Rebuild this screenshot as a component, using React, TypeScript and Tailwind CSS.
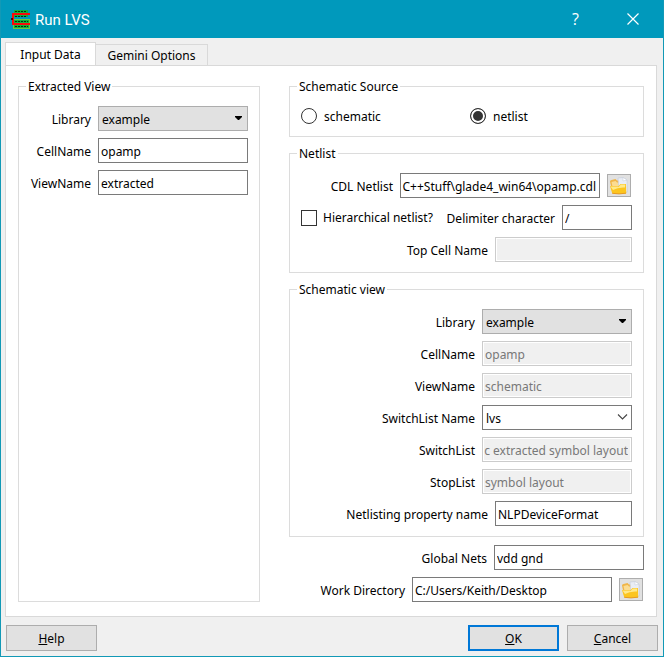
import { useEffect, useRef, useState } from "react";
import type { InputHTMLAttributes, ReactNode, SelectHTMLAttributes } from "react";
import { clsx } from "clsx";

function AppIcon() {
  return (
    <svg width="20" height="20" viewBox="0 0 20 20" shapeRendering="crispEdges" aria-hidden="true">
      <rect x="3" y="1" width="14" height="7" fill="#12b03c" />
      <rect x="2" y="10" width="17" height="10" fill="#12b03c" />
      <path d="M2.500 10.500h16v9h-16z" fill="none" stroke="#6cc644" />
      <path d="M4 2.500h12M4 7.500h12M4 12.500h13M4 17.500h13" stroke="#06300f" strokeDasharray="2 1" />
      <path d="M19 5H2v10h17" fill="none" stroke="#fb0a0a" strokeWidth="2" />
      <rect x="0" y="9" width="2" height="2" fill="#500808" />
    </svg>
  );
}

function FolderIcon() {
  return (
    <svg width="20" height="18" viewBox="0 0 20 18" aria-hidden="true">
      <path d="M1 4.500Q1 3 2.500 3l4-1L8 3.500h3V14H3z" fill="#f0b548" />
      <path d="M2.500 5l4-1L8 5.500l4 .5v6H4z" fill="#fbdc92" />
      <path d="M9 1l5-.5L18 3l.5 12H10z" fill="#e9edf5" stroke="#c3cad8" strokeWidth=".6" />
      <path d="M14 .5V4l4-1z" fill="#fff" stroke="#c3cad8" strokeWidth=".5" />
      <path d="M1 9l8 .5L11.500 7H17l.3 9.200Q10 17.500 3.200 16.300z" fill="#fcc51f" />
      <path d="M1.500 9.500l8 .5 2.300-2.500h4.500L16 10.500Q9 10 4 13z" fill="#ffe98a" />
      <path d="M3.200 16.300Q10 17.500 17 16.200" fill="none" stroke="#e59a22" />
    </svg>
  );
}

function Group({ title, className, children }: { title: string; className?: string; children: ReactNode }) {
  return (
    <fieldset className={clsx("min-w-0 border border-[#dcdcdc] pl-[7px]", className)}>
      <legend className="px-[2px] leading-[17px]">{title}</legend>
      {children}
    </fieldset>
  );
}

function Row({ label, htmlFor, children }: { label: string; htmlFor: string; children: ReactNode }) {
  return (
    <div className="flex items-center justify-end gap-[7px]">
      <label htmlFor={htmlFor} className="whitespace-nowrap pt-[2px]">
        {label}
      </label>
      {children}
    </div>
  );
}

type FieldProps = InputHTMLAttributes<HTMLInputElement> & { showEnd?: boolean };

function Field({ className, showEnd, ...rest }: FieldProps) {
  const ref = useRef<HTMLInputElement>(null);
  useEffect(() => {
    if (showEnd && ref.current) ref.current.scrollLeft = ref.current.scrollWidth;
  }, [showEnd]);
  return (
    <input
      ref={ref}
      type="text"
      className={clsx(
        "h-[25px] min-w-0 border border-[#7a7a7a] bg-white pt-[2px] text-black outline-none focus:border-[#0078d7]",
        "disabled:border-[#cccccc] disabled:bg-[#f0f0f0] disabled:text-[#787878] disabled:shadow-[inset_0_0_0_1px_#ffffff]",
        showEnd ? "pl-0 pr-[3px] text-right" : "px-[2px]",
        className,
      )}
      {...rest}
    />
  );
}

type SelectProps = SelectHTMLAttributes<HTMLSelectElement> & { editable?: boolean };

function Select({ editable, children, ...rest }: SelectProps) {
  return (
    <div className="relative w-[150px]">
      <select
        className={clsx(
          "h-[25px] w-full appearance-none border pl-[3px] pr-5 pt-[2px] text-black outline-none",
          editable ? "border-[#7a7a7a] bg-white" : "border-[#adadad] bg-[#e1e1e1]",
        )}
        {...rest}
      >
        {children}
      </select>
      {editable ? (
        <svg className="pointer-events-none absolute right-1 top-2" width="11" height="8" viewBox="0 0 11 8" aria-hidden="true">
          <path d="M1 1.500l4.500 4.500L10 1.500" fill="none" stroke="#444" strokeWidth="1.100" />
        </svg>
      ) : (
        <svg className="pointer-events-none absolute right-[6px] top-[10px]" width="7" height="4" viewBox="0 0 7 4" aria-hidden="true">
          <path d="M0 0h7v1L4 4H3L0 1z" fill="#000" />
        </svg>
      )}
    </div>
  );
}

function BrowseButton({ label }: { label: string }) {
  return (
    <button type="button" aria-label={label} className="mr-px flex h-[23px] w-6 items-center justify-center border border-[#adadad] bg-[#e1e1e1]">
      <FolderIcon />
    </button>
  );
}

function DialogButton({ children, primary }: { children: ReactNode; primary?: boolean }) {
  return (
    <button
      type="button"
      className={clsx(
        "h-[26px] w-[91px] bg-[#e1e1e1] pt-[2px]",
        primary ? "border-2 border-[#0078d7]" : "border border-[#adadad]",
      )}
    >
      {children}
    </button>
  );
}

function Radio({ label, value, source, onPick, className }: { label: string; value: string; source: string; onPick: (v: string) => void; className?: string }) {
  return (
    <label className={clsx("flex items-center gap-[7px]", className)}>
      <input
        type="radio"
        name="source"
        value={value}
        checked={source === value}
        onChange={() => onPick(value)}
        className="h-4 w-4 appearance-none rounded-full border border-[#333333] bg-white checked:bg-[#333333] checked:shadow-[inset_0_0_0_2px_#ffffff]"
      />
      <span className="-mb-[2px]">{label}</span>
    </label>
  );
}

export default function App() {
  const [source, setSource] = useState("netlist");
  return (
    <div className="flex min-h-screen flex-col border border-t-0 border-[#1299b6] bg-[#f0f0f0] font-['Noto_Sans','DejaVu_Sans',sans-serif] text-[12px] leading-4 text-black">
      <header className="flex h-[38px] items-center bg-[#0099bc] pl-[10px] text-white">
        <AppIcon />
        <h1 className="ml-1 flex-1 pt-[2px] font-['Roboto',sans-serif] text-[15px] leading-5">Run LVS</h1>
        <button type="button" aria-label="Help" className="flex h-full w-[55px] items-center justify-center font-['Open_Sans',sans-serif] text-[16px]">
          ?
        </button>
        <button type="button" aria-label="Close" className="flex h-full w-[60px] items-center justify-center">
          <svg width="12" height="12" viewBox="0 0 12 12" aria-hidden="true">
            <path d="M.5.5l11 11M11.500.5l-11 11" stroke="#fff" strokeWidth="1.200" />
          </svg>
        </button>
      </header>

      <div role="tablist" className="flex items-end pl-1 pt-1">
        <button type="button" role="tab" aria-selected="true" className="-mb-px h-6 w-[91px] border border-b-0 border-[#d9d9d9] bg-white">
          Input Data
        </button>
        <button type="button" role="tab" aria-selected="false" className="h-[21px] w-[112px] border border-b-0 border-l-0 border-[#d9d9d9] bg-[#f0f0f0] pt-[2px]">
          Gemini Options
        </button>
      </div>

      <main className="ml-1 mr-[6px] flex flex-1 gap-[29px] border border-[#d9d9d9] bg-white px-3 pb-[14px] pt-3">
        <Group title="Extracted View" className="w-[242px] pr-[11px]">
          <div className="flex flex-col gap-[7px] pt-[11px]">
            <Row label="Library" htmlFor="ext-library">
              <Select id="ext-library">
                <option>example</option>
              </Select>
            </Row>
            <Row label="CellName" htmlFor="ext-cell">
              <Field id="ext-cell" className="w-[150px]" defaultValue="opamp" />
            </Row>
            <Row label="ViewName" htmlFor="ext-view">
              <Field id="ext-view" className="w-[150px]" defaultValue="extracted" />
            </Row>
          </div>
        </Group>

        <div className="flex min-w-0 flex-1 flex-col gap-2">
          <Group title="Schematic Source">
            <div className="flex h-[41px] items-center pl-1">
              <Radio label="schematic" value="schematic" source={source} onPick={setSource} className="w-[169px]" />
              <Radio label="netlist" value="netlist" source={source} onPick={setSource} />
            </div>
          </Group>

          <Group title="Netlist" className="pr-[11px]">
            <div className="flex flex-col gap-[7px] pb-[10px] pt-[11px]">
              <Row label="CDL Netlist" htmlFor="cdl">
                <Field id="cdl" showEnd className="w-[200px]" defaultValue="C++Stuff\glade4_win64\opamp.cdl" />
                <BrowseButton label="Browse for netlist" />
              </Row>
              <div className="flex items-center justify-between pl-1">
                <label className="flex items-center gap-[6px] whitespace-nowrap">
                  <input type="checkbox" className="h-4 w-4 appearance-none border border-[#333333] bg-white checked:bg-[#333333] checked:shadow-[inset_0_0_0_3px_#ffffff]" />
                  Hierarchical netlist?
                </label>
                <Row label="Delimiter character" htmlFor="delimiter">
                  <Field id="delimiter" className="w-[70px]" defaultValue="/" />
                </Row>
              </div>
              <Row label="Top Cell Name" htmlFor="top-cell">
                <Field id="top-cell" disabled className="w-[137px]" />
              </Row>
            </div>
          </Group>

          <Group title="Schematic view" className="pr-[11px]">
            <div className="flex flex-col gap-[7px] pb-[10px] pt-[11px]">
              <Row label="Library" htmlFor="sch-library">
                <Select id="sch-library">
                  <option>example</option>
                </Select>
              </Row>
              <Row label="CellName" htmlFor="sch-cell">
                <Field id="sch-cell" disabled className="w-[150px]" defaultValue="opamp" />
              </Row>
              <Row label="ViewName" htmlFor="sch-view">
                <Field id="sch-view" disabled className="w-[150px]" defaultValue="schematic" />
              </Row>
              <Row label="SwitchList Name" htmlFor="switch-name">
                <Select id="switch-name" editable>
                  <option>lvs</option>
                </Select>
              </Row>
              <Row label="SwitchList" htmlFor="switch-list">
                <Field id="switch-list" showEnd disabled className="w-[150px]" defaultValue="c extracted symbol layout" />
              </Row>
              <Row label="StopList" htmlFor="stop-list">
                <Field id="stop-list" disabled className="w-[150px]" defaultValue="symbol layout" />
              </Row>
              <Row label="Netlisting property name" htmlFor="property">
                <Field id="property" className="w-[137px]" defaultValue="NLPDeviceFormat" />
              </Row>
            </div>
          </Group>

          <div className="flex flex-col gap-[7px]">
            <Row label="Global Nets" htmlFor="nets">
              <Field id="nets" className="w-[150px]" defaultValue="vdd gnd" />
            </Row>
            <Row label="Work Directory" htmlFor="work-dir">
              <Field id="work-dir" className="w-[200px]" defaultValue="C:/Users/Keith/Desktop" />
              <BrowseButton label="Browse for directory" />
            </Row>
          </div>
        </div>
      </main>

      <footer className="flex gap-2 pb-[5px] pl-[5px] pr-[5px] pt-2">
        <DialogButton>
          <u>H</u>elp
        </DialogButton>
        <div className="flex-1" />
        <DialogButton primary>
          <u>O</u>K
        </DialogButton>
        <DialogButton>
          <u>C</u>ancel
        </DialogButton>
      </footer>
    </div>
  );
}
